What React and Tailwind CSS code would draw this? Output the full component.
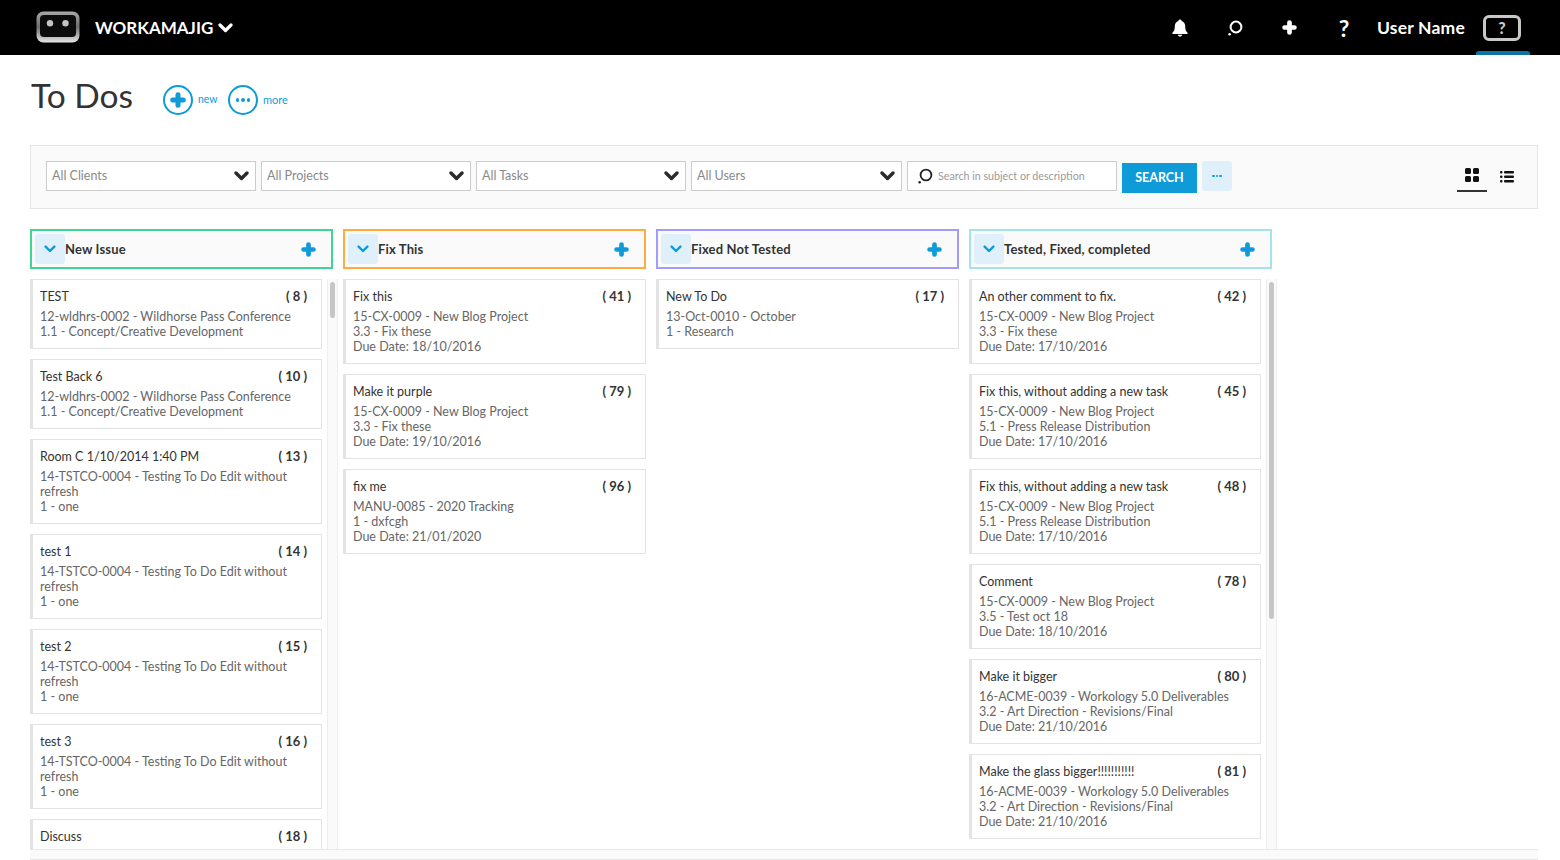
import React from 'react';

const COLUMNS = [
  {
    name: 'New Issue',
    border: 'border-[#41d594]',
    scroll: 'h-[36px]',
    cards: [
      { title: 'TEST', num: 8, lines: ['12-wldhrs-0002 - Wildhorse Pass Conference', '1.1 - Concept/Creative Development'] },
      { title: 'Test Back 6', num: 10, lines: ['12-wldhrs-0002 - Wildhorse Pass Conference', '1.1 - Concept/Creative Development'] },
      { title: 'Room C 1/10/2014 1:40 PM', num: 13, lines: ['14-TSTCO-0004 - Testing To Do Edit without', 'refresh', '1 - one'] },
      { title: 'test 1', num: 14, lines: ['14-TSTCO-0004 - Testing To Do Edit without', 'refresh', '1 - one'] },
      { title: 'test 2', num: 15, lines: ['14-TSTCO-0004 - Testing To Do Edit without', 'refresh', '1 - one'] },
      { title: 'test 3', num: 16, lines: ['14-TSTCO-0004 - Testing To Do Edit without', 'refresh', '1 - one'] },
      // runs off the bottom of the list
      { title: 'Discuss', num: 18, lines: [], tall: true },
    ],
  },
  {
    name: 'Fix This',
    border: 'border-[#ffab40]',
    cards: [
      { title: 'Fix this', num: 41, lines: ['15-CX-0009 - New Blog Project', '3.3 - Fix these', 'Due Date: 18/10/2016'] },
      { title: 'Make it purple', num: 79, lines: ['15-CX-0009 - New Blog Project', '3.3 - Fix these', 'Due Date: 19/10/2016'] },
      { title: 'fix me', num: 96, lines: ['MANU-0085 - 2020 Tracking', '1 - dxfcgh', 'Due Date: 21/01/2020'] },
    ],
  },
  {
    name: 'Fixed Not Tested',
    border: 'border-[#a29bfe]',
    cards: [{ title: 'New To Do', num: 17, lines: ['13-Oct-0010 - October', '1 - Research'] }],
  },
  {
    name: 'Tested, Fixed, completed',
    border: 'border-[#a3e4ea]',
    scroll: 'h-[337px]',
    cards: [
      { title: 'An other comment to fix.', num: 42, lines: ['15-CX-0009 - New Blog Project', '3.3 - Fix these', 'Due Date: 17/10/2016'] },
      { title: 'Fix this, without adding a new task', num: 45, lines: ['15-CX-0009 - New Blog Project', '5.1 - Press Release Distribution', 'Due Date: 17/10/2016'] },
      { title: 'Fix this, without adding a new task', num: 48, lines: ['15-CX-0009 - New Blog Project', '5.1 - Press Release Distribution', 'Due Date: 17/10/2016'] },
      { title: 'Comment', num: 78, lines: ['15-CX-0009 - New Blog Project', '3.5 - Test oct 18', 'Due Date: 18/10/2016'] },
      { title: 'Make it bigger', num: 80, lines: ['16-ACME-0039 - Workology 5.0 Deliverables', '3.2 - Art Direction - Revisions/Final', 'Due Date: 21/10/2016'] },
      { title: 'Make the glass bigger!!!!!!!!!!!', num: 81, lines: ['16-ACME-0039 - Workology 5.0 Deliverables', '3.2 - Art Direction - Revisions/Final', 'Due Date: 21/10/2016'] },
    ],
  },
];

function Plus({ size = 14, className = '' }) {
  return (
    <svg width={size} height={size} viewBox="0 0 14 14" className={className} fill="none" stroke="currentColor" strokeWidth="4.4" strokeLinecap="round">
      <path d="M7 2.4v9.2M2.4 7h9.2" />
    </svg>
  );
}

function Chevron({ className = '', w = 15, h = 10, sw = 3.4 }) {
  return (
    <svg width={w} height={h} viewBox="0 0 15 10" className={className} fill="none" stroke="currentColor" strokeWidth={sw} strokeLinecap="round" strokeLinejoin="round">
      <path d="M2 2l5.5 5.5L13 2" />
    </svg>
  );
}

function SearchIcon({ size = 16, sw = 2 }) {
  return (
    <svg width={size} height={size} viewBox="0 0 16 16" fill="none" stroke="currentColor" strokeWidth={sw} strokeLinecap="round">
      <circle cx="9" cy="7" r="5.4" />
      <path d="M2.6 14.2h.1" strokeWidth="2.4" />
    </svg>
  );
}

function Logo() {
  return (
    <svg width="44" height="32" viewBox="0 0 44 32">
      <defs>
        <linearGradient id="chrome" x1="0" y1="0" x2="0" y2="1">
          <stop offset="0" stopColor="#a8a8a8" />
          <stop offset="0.5" stopColor="#6e6e6e" />
          <stop offset="1" stopColor="#e6e6e6" />
        </linearGradient>
      </defs>
      <rect x="0.5" y="0.5" width="43" height="31" rx="7" fill="url(#chrome)" />
      <rect x="4" y="4" width="36" height="22" rx="4" fill="#0c0c0c" />
      <circle cx="14" cy="12.300" r="3.200" fill="#c4c4c4" />
      <circle cx="29.500" cy="12.300" r="3.200" fill="#c4c4c4" />
    </svg>
  );
}

function Header() {
  return (
    <header className="h-[55px] shrink-0 bg-black flex items-center text-white relative">
      <div className="ml-[36px] w-[44px] h-[32px] mt-[-2px]"><Logo /></div>
      <div className="ml-[15px] text-[17px] font-bold flex items-center gap-[5px]">
        WORKAMAJIG
        <Chevron w={15} h={10} sw={3.2} />
      </div>
      <div className="ml-auto flex items-center">
        <svg width="16" height="18" viewBox="0 0 16 18" fill="white" className="mr-[39px]">
          <path d="M8 0.5c.9 0 1.5.6 1.6 1.4C12 2.6 13.2 4.6 13.2 7.2c0 3.4.7 5 2.3 6.5.4.5.2 1.2-.5 1.2H1c-.7 0-.9-.7-.5-1.2C2.100 12.200 2.800 10.600 2.800 7.200c0-2.600 1.200-4.600 3.600-5.300C6.500 1.100 7.100.5 8 .5z" />
          <path d="M5.800 15.800h4.400c-.2 1-1.100 1.800-2.200 1.800s-2-.8-2.200-1.800z" />
        </svg>
        <div className="mr-[39px] text-white"><SearchIcon size={16} sw={2} /></div>
        <Plus size={15} className="mr-[41px] text-white" />
        <span className="text-[23px] font-bold w-[12px] mr-[27px] mt-[1px] leading-none text-center">?</span>
        <span className="text-[17.500px] font-bold tracking-[0.2px] w-[88px] mt-[1px] whitespace-nowrap">User Name</span>
        <div className="ml-[18px] mr-[39px] w-[38px] h-[26px] border-[3px] border-[#c8c8c8] rounded-[6px] flex items-center justify-center text-[16px] font-black text-[#c8c8c8]">?</div>
      </div>
      <div className="absolute right-[30px] bottom-0 w-[54px] h-[4px] bg-[#0b76a6] rounded-t-[3px]" />
    </header>
  );
}

function TitleRow() {
  return (
    <div className="h-[90px] shrink-0 pl-[31px] flex items-center text-[#0e9bd8]">
      <h1 className="text-[33.500px] leading-none text-[#333] w-[132px] whitespace-nowrap mt-[-8px]">To Dos</h1>
      <div className="flex items-center">
        <div className="w-[30px] h-[30px] rounded-full border-2 border-[#0e9bd8] flex items-center justify-center"><Plus size={16} /></div>
        <span className="ml-[5px] text-[10.500px] w-[25px]">new</span>
        <div className="ml-[5px] w-[30px] h-[30px] rounded-full border-2 border-[#0e9bd8] flex items-center justify-center gap-[2px]">
          <i className="w-[3.5px] h-[3.5px] rounded-full bg-[#0e9bd8]" />
          <i className="w-[3.5px] h-[3.5px] rounded-full bg-[#0e9bd8]" />
          <i className="w-[3.5px] h-[3.5px] rounded-full bg-[#0e9bd8]" />
        </div>
        <span className="ml-[5px] text-[11px]">more</span>
      </div>
    </div>
  );
}

function Select({ label, width = 'w-[210px]' }) {
  return (
    <div className={`${width} h-[30px] border border-[#ccc] bg-white pl-[5px] pr-[6px] flex items-center justify-between text-[12.500px] text-[#8a8a8a]`}>
      {label}
      <Chevron w={15} h={10} sw={3.4} className="text-[#2b2b2b]" />
    </div>
  );
}

function FilterBar() {
  return (
    <div className="ml-[30px] mr-[22px] h-[64px] shrink-0 border border-[#e5e5e5] bg-[#fafafa] pl-[15px] pt-[15px] flex items-start">
      <div className="flex gap-[5px]">
        <Select label="All Clients" />
        <Select label="All Projects" />
        <Select label="All Tasks" />
        <Select label="All Users" width="w-[211px]" />
        <div className="w-[210px] h-[30px] border border-[#ccc] bg-white pl-[9px] flex items-center gap-[5px] text-[10.700px] text-[#9a9a9a] whitespace-nowrap">
          <span className="text-[#222]"><SearchIcon size={16} sw={1.8} /></span>
          Search in subject or description
        </div>
      </div>
      <button className="ml-[5px] mt-[2px] w-[75px] h-[30px] bg-[#0e9bd8] text-white text-[12.500px] font-bold">SEARCH</button>
      <div className="ml-[5px] w-[30px] h-[30px] rounded-[3px] bg-[#dff0fa] flex items-center justify-center gap-[1px]">
        <i className="w-[2.500px] h-[2.500px] rounded-full bg-[#0e9bd8]" />
        <i className="w-[2.500px] h-[2.500px] rounded-full bg-[#0e9bd8]" />
        <i className="w-[2.500px] h-[2.500px] rounded-full bg-[#0e9bd8]" />
      </div>
      <div className="ml-auto mr-[15px] flex items-start">
        <div className="w-[30px] h-[31px] border-b-2 border-[#333] flex justify-center pt-[7px]">
          <svg width="14" height="14" viewBox="0 0 14 14" fill="#111">
            <rect x="0" y="0" width="6" height="6" rx="1.500" />
            <rect x="8" y="0" width="6" height="6" rx="1.500" />
            <rect x="0" y="8" width="6" height="6" rx="1.500" />
            <rect x="8" y="8" width="6" height="6" rx="1.500" />
          </svg>
        </div>
        <div className="ml-[5px] w-[30px] flex justify-center pt-[10px]">
          <svg width="14" height="12" viewBox="0 0 14 12" fill="#111">
            <rect x="0" y="0" width="2.500" height="2.500" rx="1" />
            <rect x="4" y="0" width="10" height="2.500" rx="1" />
            <rect x="0" y="4.500" width="2.500" height="2.500" rx="1" />
            <rect x="4" y="4.500" width="10" height="2.500" rx="1" />
            <rect x="0" y="9" width="2.500" height="2.500" rx="1" />
            <rect x="4" y="9" width="10" height="2.500" rx="1" />
          </svg>
        </div>
      </div>
    </div>
  );
}

function Card({ card }) {
  return (
    <div className={`shrink-0 border border-l-[3px] border-[#e3e3e3] bg-white pl-[7px] pr-[14px] py-[9px] text-[12.500px] leading-[15px] text-[#666] whitespace-nowrap ${card.tall ? 'min-h-[85px]' : ''}`}>
      <div className="flex justify-between text-[#333] mb-[5px]">
        <span>{card.title}</span>
        <span className="font-bold text-[13px]">( {card.num} )</span>
      </div>
      {card.lines.map((line, i) => <div key={i}>{line}</div>)}
    </div>
  );
}

function Column({ col }) {
  return (
    <div className="w-[303px] shrink-0 flex flex-col min-h-0">
      <div className={`h-[40px] shrink-0 border-2 ${col.border} bg-[#fafafa] pl-[3px] pr-[15px] flex items-center`}>
        <div className="w-[30px] h-[30px] rounded-[3px] bg-[#dff0fa] flex items-center justify-center text-[#0e9bd8]">
          <Chevron w={12} h={8} sw={3} />
        </div>
        <span className="mt-[1px] text-[13px] font-bold tracking-[0.15px] text-[#333] whitespace-nowrap">{col.name}</span>
        <Plus size={15} className="ml-auto text-[#0e9bd8]" />
      </div>
      <div className={`mt-[10px] flex-1 min-h-0 flex ${col.scroll ? 'w-[308px]' : ''}`}>
        <div className={`${col.scroll ? 'w-[292px]' : 'w-full'} flex flex-col gap-[10px] overflow-hidden`}>
          {col.cards.map((c) => <Card key={c.num} card={c} />)}
        </div>
        {col.scroll && (
          <div className="ml-[5px] w-[11px] border-x border-[#eee] bg-[#fafafa] pt-[3px] px-[2px]">
            <div className={`${col.scroll} rounded-full bg-[#c6c6c6]`} />
          </div>
        )}
      </div>
    </div>
  );
}

export default function App() {
  return (
    <div className="h-screen overflow-hidden flex flex-col bg-white font-['Lato','Open_Sans',sans-serif]">
      <Header />
      <TitleRow />
      <FilterBar />
      <div className="flex-1 min-h-0 mt-[20px] ml-[30px] flex gap-[10px]">
        {COLUMNS.map((col) => <Column key={col.name} col={col} />)}
      </div>
      <div className="ml-[30px] mr-[22px] h-[11px] shrink-0 border-y border-[#e8e8e8] bg-[#fafafa]" />
    </div>
  );
}
